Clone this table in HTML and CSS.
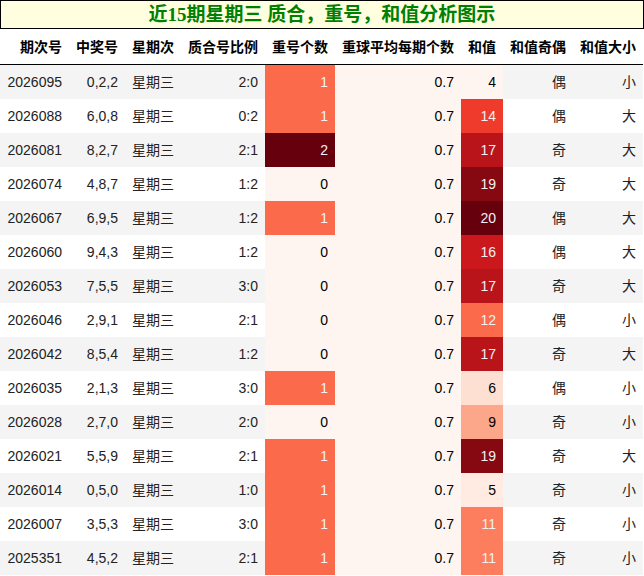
FILE: index.html
```html
<!DOCTYPE html>
<html lang="zh">
<head>
<meta charset="utf-8">
<link rel="stylesheet" href="styles.css">
</head>
<body>
<div class="title">近15期星期三 质合，重号，和值分析图示</div>
<table class="grid">
<colgroup>
<col class="c1"><col class="c2"><col class="c3"><col class="c4"><col class="c5"><col class="c6"><col class="c7"><col class="c8"><col class="c9">
</colgroup>
<thead>
<tr><th>期次号</th><th>中奖号</th><th>星期次</th><th>质合号比例</th><th>重号个数</th><th>重球平均每期个数</th><th>和值</th><th>和值奇偶</th><th>和值大小</th></tr>
</thead>
<tbody>
<tr><td>2026095</td><td>0,2,2</td><td>星期三</td><td>2:0</td><td class="hm light" style="background:#fb6a4a">1</td><td class="hm" style="background:#fff5f0">0.7</td><td class="hm" style="background:#fff5f0">4</td><td>偶</td><td>小</td></tr>
<tr><td>2026088</td><td>6,0,8</td><td>星期三</td><td>0:2</td><td class="hm light" style="background:#fb6a4a">1</td><td class="hm" style="background:#fff5f0">0.7</td><td class="hm light" style="background:#ef3b2c">14</td><td>偶</td><td>大</td></tr>
<tr><td>2026081</td><td>8,2,7</td><td>星期三</td><td>2:1</td><td class="hm light" style="background:#67000d">2</td><td class="hm" style="background:#fff5f0">0.7</td><td class="hm light" style="background:#b8141a">17</td><td>奇</td><td>大</td></tr>
<tr><td>2026074</td><td>4,8,7</td><td>星期三</td><td>1:2</td><td class="hm" style="background:#fff5f0">0</td><td class="hm" style="background:#fff5f0">0.7</td><td class="hm light" style="background:#860811">19</td><td>奇</td><td>大</td></tr>
<tr><td>2026067</td><td>6,9,5</td><td>星期三</td><td>1:2</td><td class="hm light" style="background:#fb6a4a">1</td><td class="hm" style="background:#fff5f0">0.7</td><td class="hm light" style="background:#67000d">20</td><td>偶</td><td>大</td></tr>
<tr><td>2026060</td><td>9,4,3</td><td>星期三</td><td>1:2</td><td class="hm" style="background:#fff5f0">0</td><td class="hm" style="background:#fff5f0">0.7</td><td class="hm light" style="background:#cb181d">16</td><td>偶</td><td>大</td></tr>
<tr><td>2026053</td><td>7,5,5</td><td>星期三</td><td>3:0</td><td class="hm" style="background:#fff5f0">0</td><td class="hm" style="background:#fff5f0">0.7</td><td class="hm light" style="background:#b8141a">17</td><td>奇</td><td>大</td></tr>
<tr><td>2026046</td><td>2,9,1</td><td>星期三</td><td>2:1</td><td class="hm" style="background:#fff5f0">0</td><td class="hm" style="background:#fff5f0">0.7</td><td class="hm light" style="background:#fb6a4a">12</td><td>偶</td><td>小</td></tr>
<tr><td>2026042</td><td>8,5,4</td><td>星期三</td><td>1:2</td><td class="hm" style="background:#fff5f0">0</td><td class="hm" style="background:#fff5f0">0.7</td><td class="hm light" style="background:#b8141a">17</td><td>奇</td><td>大</td></tr>
<tr><td>2026035</td><td>2,1,3</td><td>星期三</td><td>3:0</td><td class="hm light" style="background:#fb6a4a">1</td><td class="hm" style="background:#fff5f0">0.7</td><td class="hm" style="background:#fee0d2">6</td><td>偶</td><td>小</td></tr>
<tr><td>2026028</td><td>2,7,0</td><td>星期三</td><td>2:0</td><td class="hm" style="background:#fff5f0">0</td><td class="hm" style="background:#fff5f0">0.7</td><td class="hm" style="background:#fca68a">9</td><td>奇</td><td>小</td></tr>
<tr><td>2026021</td><td>5,5,9</td><td>星期三</td><td>2:1</td><td class="hm light" style="background:#fb6a4a">1</td><td class="hm" style="background:#fff5f0">0.7</td><td class="hm light" style="background:#860811">19</td><td>奇</td><td>大</td></tr>
<tr><td>2026014</td><td>0,5,0</td><td>星期三</td><td>1:0</td><td class="hm light" style="background:#fb6a4a">1</td><td class="hm" style="background:#fff5f0">0.7</td><td class="hm" style="background:#ffebe1">5</td><td>奇</td><td>小</td></tr>
<tr><td>2026007</td><td>3,5,3</td><td>星期三</td><td>3:0</td><td class="hm light" style="background:#fb6a4a">1</td><td class="hm" style="background:#fff5f0">0.7</td><td class="hm light" style="background:#fc7e5e">11</td><td>奇</td><td>小</td></tr>
<tr><td>2025351</td><td>4,5,2</td><td>星期三</td><td>2:1</td><td class="hm light" style="background:#fb6a4a">1</td><td class="hm" style="background:#fff5f0">0.7</td><td class="hm light" style="background:#fc7e5e">11</td><td>奇</td><td>小</td></tr>
</tbody>
</table>
</body>
</html>
```
FILE: styles.css
```css
body {
  margin: 0;
  background: #ffffff;
  font-family: "Liberation Sans", "Noto Sans CJK SC", sans-serif;
  font-size: 14px;
  color: #222222;
}

.title {
  box-sizing: border-box;
  width: 644px;
  height: 29px;
  border: 1px solid #000000;
  background: #ffffe0;
  color: #008000;
  font-family: "Liberation Serif", "Noto Sans CJK SC", serif;
  font-weight: bold;
  font-size: 19px;
  line-height: 27px;
  text-align: center;
}

.grid {
  border-collapse: collapse;
  table-layout: fixed;
  width: 643px;
}

.c1 { width: 69px; }
.c2 { width: 56px; }
.c3 { width: 56px; }
.c4 { width: 84px; }
.c5 { width: 70px; }
.c6 { width: 126px; }
.c7 { width: 42px; }
.c8 { width: 70px; }
.c9 { width: 70px; }

.grid th {
  height: 35px;
  padding: 0 7px 0 0;
  border-bottom: 1px solid #000000;
  text-align: right;
  vertical-align: middle;
  font-weight: bold;
  color: #000000;
  line-height: 1;
  white-space: nowrap;
}

.grid td {
  height: 34px;
  padding: 0 7px 0 0;
  text-align: right;
  vertical-align: middle;
  line-height: 1;
  white-space: nowrap;
}

.grid tbody tr:nth-child(odd) {
  background: #f4f4f4;
}

.grid td.hm {
  color: #000000;
}

.grid td.light {
  color: #f1f1f1;
}
```
